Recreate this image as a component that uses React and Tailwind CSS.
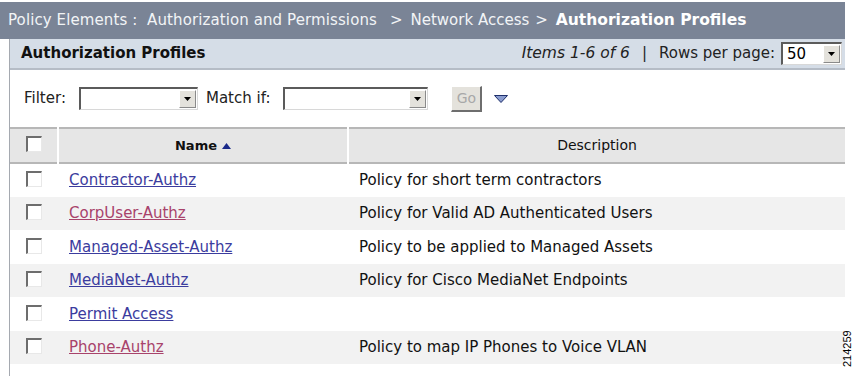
import { useState } from 'react';

const profiles = [
  { name: 'Contractor-Authz', desc: 'Policy for short term contractors', visited: false },
  { name: 'CorpUser-Authz', desc: 'Policy for Valid AD Authenticated Users', visited: true },
  { name: 'Managed-Asset-Authz', desc: 'Policy to be applied to Managed Assets', visited: false },
  { name: 'MediaNet-Authz', desc: 'Policy for Cisco MediaNet Endpoints', visited: false },
  { name: 'Permit Access', desc: '', visited: false },
  { name: 'Phone-Authz', desc: 'Policy to map IP Phones to Voice VLAN', visited: true },
];

const font = { fontFamily: '"DejaVu Sans", Verdana, sans-serif' };

const Checkbox = () => (
  <span className="inline-block w-[16px] h-[16px] bg-white border-t-2 border-l-2 border-[#6d6d6d] border-r border-b border-r-[#e8e8e8] border-b-[#e8e8e8]" />
);

const Select = ({ width, value }) => (
  <div className={`flex items-stretch h-[23px] bg-white border-t-2 border-l-2 border-[#5b5b5b] border-r border-b border-r-[#d8d8d8] border-b-[#d8d8d8] ${width}`}>
    <span className="flex-1 pl-1 text-[15px] leading-[20px] text-black">{value}</span>
    <span className="w-[17px] m-[1px] flex items-center justify-center bg-[#e4e2dc] border border-t-white border-l-white border-r-[#8a8a8a] border-b-[#8a8a8a]">
      <svg width="7" height="4" viewBox="0 0 7 4"><path d="M0 0h7L3.5 4z" fill="#000" /></svg>
    </span>
  </div>
);

const App = () => {
  const [checked] = useState([]);

  return (
    <div className="w-[862px] h-[376px] bg-white relative overflow-hidden" style={font}>
      <div className="pt-[2px] pr-[17px]">
        {/* breadcrumb */}
        <div className="h-[37px] bg-[#7a8496] flex items-center pl-[8px] text-[15px] text-[#f2f4f6] whitespace-nowrap">
          <span className="tracking-[0.1px]">Policy Elements :&nbsp; Authorization and Permissions</span>
          <span className="ml-[13px]">&gt;</span>
          <span className="ml-[8px]">Network Access</span>
          <span className="ml-[6px] mr-[8px]">&gt;</span>
          <span className="font-bold text-[15.5px] text-white">Authorization Profiles</span>
        </div>

        <div className="ml-[9px] border-l border-[#a5a9b0]">
          {/* panel header */}
          <div className="h-[31px] bg-[#d5dde7] border-b-2 border-[#b5bcc6] flex items-center justify-between pl-[11px] pr-[3px]">
            <span className="font-bold text-[15px] text-[#111]">Authorization Profiles</span>
            <div className="flex items-center text-[15px] text-[#222]">
              <span className="italic text-[15.5px]">Items 1-6 of 6</span>
              <span className="ml-[12px] mr-[12px]">|</span>
              <span className="mr-[6px]">Rows per page:</span>
              <Select width="w-[61px]" value="50" />
            </div>
          </div>

          {/* filter row */}
          <div className="h-[57px] flex items-center pl-[14px] text-[15px] text-[#222]">
            <span className="mr-[13px]">Filter:</span>
            <Select width="w-[119px]" value="" />
            <span className="ml-[8px] mr-[13px]">Match if:</span>
            <Select width="w-[145px]" value="" />
            <span className="ml-[23px] w-[31px] h-[26px] flex items-center justify-center bg-[#e4e2dc] text-[#a8a8a8] text-[14px] border border-t-white border-l-white border-r-[#6e6e6e] border-b-[#6e6e6e] border-r-2 border-b-2">Go</span>
            <svg className="ml-[12px]" width="14" height="8" viewBox="0 0 14 8">
              <path d="M0.5 0.5h13L7 7.5z" fill="#8a9ccf" stroke="#1e2f6b" strokeWidth="1" />
            </svg>
          </div>

          {/* table */}
          <table className="w-full border-collapse text-[15px] text-[#111]">
            <thead>
              <tr className="h-[35px] bg-[#e6e6e6] border-t-2 border-b-2 border-[#b7b7b7]">
                <th className="w-[48px] text-center align-middle border-r-2 border-white">
                  <span className="inline-flex pt-[4px]"><Checkbox /></span>
                </th>
                <th className="w-[290px] border-r-2 border-white font-bold text-[13px] text-center">
                  <span className="inline-flex items-center gap-[5px]">
                    Name
                    <svg width="9" height="6" viewBox="0 0 9 6"><path d="M0 6L4.5 0 9 6z" fill="#1b2a8a" /></svg>
                  </span>
                </th>
                <th className="font-normal text-[14px] text-center">Description</th>
              </tr>
            </thead>
            <tbody>
              {profiles.map((p, i) => (
                <tr key={p.name} className={`h-[33.5px] ${i % 2 === 1 ? 'bg-[#f2f2f2]' : 'bg-white'}`}>
                  <td className="text-center align-middle">
                    <span className="inline-flex pt-[4px]"><Checkbox checked={checked.includes(p.name)} /></span>
                  </td>
                  <td className="pl-[11px]">
                    <a className={`underline ${p.visited ? 'text-[#a8436b]' : 'text-[#3b3c9e]'}`}>{p.name}</a>
                  </td>
                  <td className="pl-[11px]">{p.desc}</td>
                </tr>
              ))}
            </tbody>
          </table>
          <div className="h-[20px]" />
        </div>
      </div>

      <span
        className="absolute left-[842px] top-[367px] origin-top-left -rotate-90 text-[11px] text-black leading-none"
        style={{ fontFamily: '"Liberation Sans", Arial, sans-serif' }}
      >
        214259
      </span>
    </div>
  );
};

export default App;
